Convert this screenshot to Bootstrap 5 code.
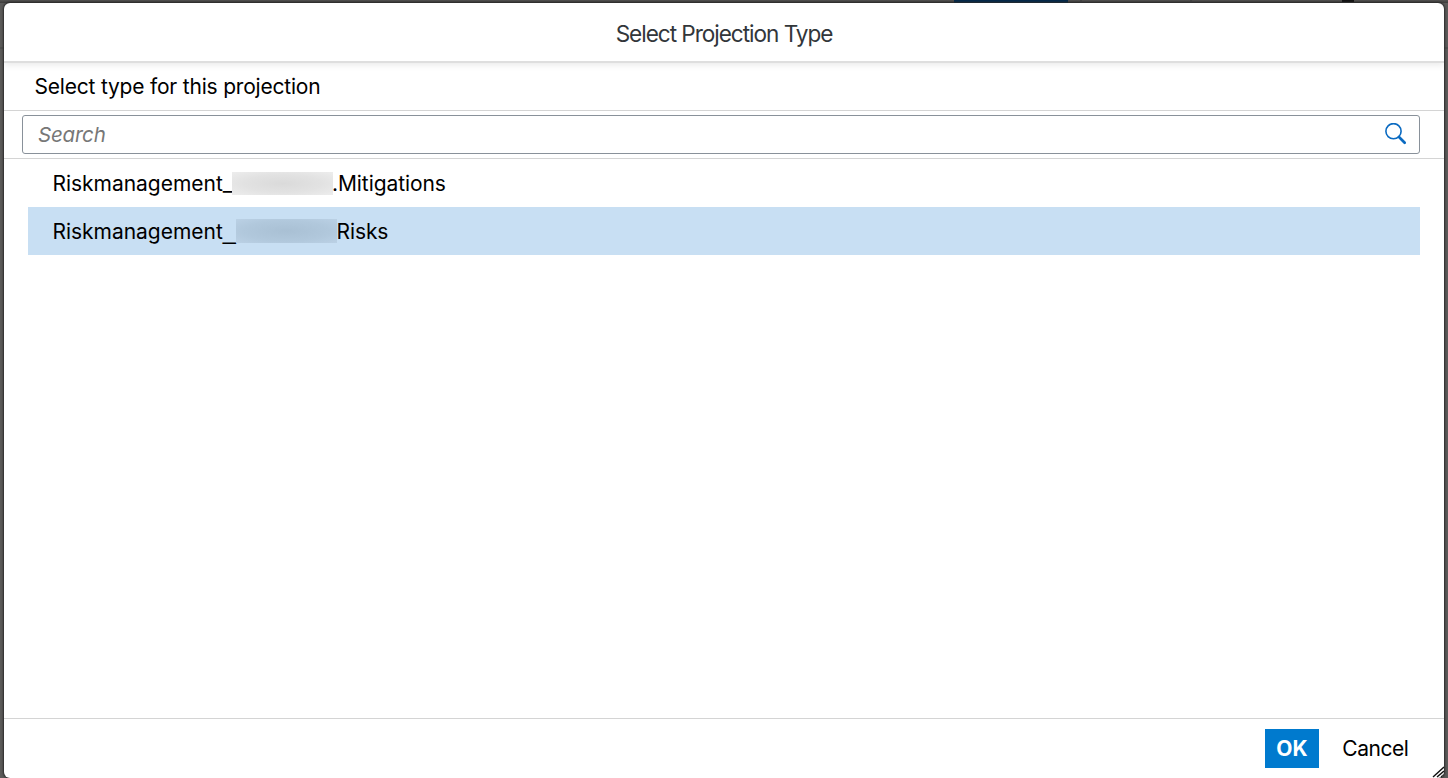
<!DOCTYPE html>
<html lang="en">
<head>
<meta charset="utf-8">
<meta name="viewport" content="width=device-width, initial-scale=1">
<title>Select Projection Type</title>
<link href="https://cdn.jsdelivr.net/npm/bootstrap@5.3.0/dist/css/bootstrap.min.css" rel="stylesheet">
<style>
  body { height: 778px; padding: 3px 4px 0; background: #5b5a59; font-family: Inter, "Liberation Sans", sans-serif; font-size: 21px; line-height: 1; color: #000; }
  .backdrop-strip { height: 3px; background: linear-gradient(#555453, #3c3b3a); }
  .strip-tab { left: 954px; width: 114px; height: 3px; background: #03294a; }
  .strip-mark { width: 2px; height: 3px; background: #444; }
  .strip-word { left: 1342px; width: 12px; height: 2px; background: #111; }
  .backdrop-rule { height: 2px; top: 47px; background: #50504f; }
  .dialog { height: 775px; background: #fff; border-radius: 6px; box-shadow: 0 0 2px 1px #2a2a2a; }
  .dialog-head { height: 60px; padding-top: 5px; border-bottom: 2px solid #dedede; box-shadow: 0 2px 7px rgba(0,0,0,.09); color: #32363a; font-size: 22.6px; letter-spacing: -1.04px; }
  .dialog-sub { height: 48px; padding-left: 30.5px; border-bottom: 1px solid #d4d4d4; letter-spacing: -.2px; }
  .search-strip { height: 48px; padding: 4px 24px 4px 18px; border-bottom: 1px solid #d4d4d4; }
  .search-box { height: 39px; border: 1px solid #89919a; border-radius: 3px; padding: 0 11px 0 15px; }
  .search-box input { font-size: 20.5px; color: #000; letter-spacing: -.2px; }
  .search-box input::placeholder { color: #777; font-style: italic; opacity: 1; }
  .type-list { padding: 0 24px; }
  .type-row { height: 48px; padding-left: 24.5px; }
  .type-row.chosen { background: #c8dff3; }
  .prefix { width: 179.5px; white-space: nowrap; letter-spacing: -.03px; }
  .chosen .prefix { width: 183.5px; }
  .joiner { font-family: "Liberation Sans", sans-serif; font-size: 23.5px; line-height: 0; }
  .name-a { letter-spacing: -.08px; margin-left: -1px; }
  .name-b { letter-spacing: -.1px; margin-left: -.5px; }
  .redacted { width: 101px; height: 23px; margin-top: 1px; background: radial-gradient(ellipse at center, #dadada 0%, #e2e2e2 55%, #ededed 100%); }
  .chosen .redacted { height: 24px; margin-top: 0; background: radial-gradient(ellipse at center, #a9c0d4 0%, #b1c8dc 60%, #bbd1e5 100%); }
  .dialog-foot { height: 60px; border-top: 1px solid #d4d4d4; padding-right: 35px; }
  .dialog-foot .btn { height: 39px; font-size: 21px; line-height: 1; }
  .btn-ok { width: 54px; background: #007ace; color: #fff; border-radius: 0; }
  .btn-cancel { width: 90px; padding: 0 0 0 23.3px; text-align: left; letter-spacing: -.45px; white-space: nowrap; color: #000; }
  .resize-grip { right: 0; bottom: 0; }
</style>
</head>
<body class="position-relative overflow-hidden">
<div class="backdrop-strip position-absolute top-0 start-0 w-100"></div>
<div class="strip-tab position-absolute top-0"></div>
<div class="strip-mark position-absolute top-0" style="left:1080px"></div>
<div class="strip-mark position-absolute top-0" style="left:1190px"></div>
<div class="strip-word position-absolute top-0"></div>
<div class="backdrop-rule position-absolute start-0 w-100"></div>
<main class="dialog position-relative d-flex flex-column overflow-hidden">
  <header class="dialog-head d-flex align-items-center justify-content-center flex-shrink-0">Select Projection Type</header>
  <div class="dialog-sub d-flex align-items-center flex-shrink-0">Select type for this projection</div>
  <div class="search-strip flex-shrink-0">
    <div class="search-box d-flex align-items-center">
      <input class="border-0 bg-transparent p-0 flex-grow-1" type="text" placeholder="Search" aria-label="Search" style="outline:0">
      <svg width="24" height="24" viewBox="0 0 24 24" fill="none" stroke="#0a6ac1" stroke-linecap="round"><circle cx="9.5" cy="8.2" r="7.6" stroke-width="1.6"/><path d="M15 14l5.7 5.7" stroke-width="2.7"/></svg>
    </div>
  </div>
  <div class="type-list flex-grow-1">
    <div class="type-row d-flex align-items-center"><span class="prefix">Riskmanagement_</span><span class="redacted"></span><span class="name-a">.Mitigations</span></div>
    <div class="type-row chosen d-flex align-items-center"><span class="prefix">Riskmanagement<span class="joiner">_</span></span><span class="redacted"></span><span class="name-b">Risks</span></div>
  </div>
  <footer class="dialog-foot d-flex align-items-center justify-content-end flex-shrink-0">
    <button class="btn btn-ok border-0 p-0 fw-bold" type="button">OK</button>
    <button class="btn btn-cancel border-0" type="button">Cancel</button>
  </footer>
  <svg class="resize-grip position-absolute" width="12" height="13" viewBox="0 0 12 13" stroke="#111" stroke-width="1.4"><path d="M1 12L12 2M5 12L12 6M9 12L12 9.5"/></svg>
</main>
<script src="https://cdn.jsdelivr.net/npm/bootstrap@5.3.0/dist/js/bootstrap.bundle.min.js"></script>
</body>
</html>
